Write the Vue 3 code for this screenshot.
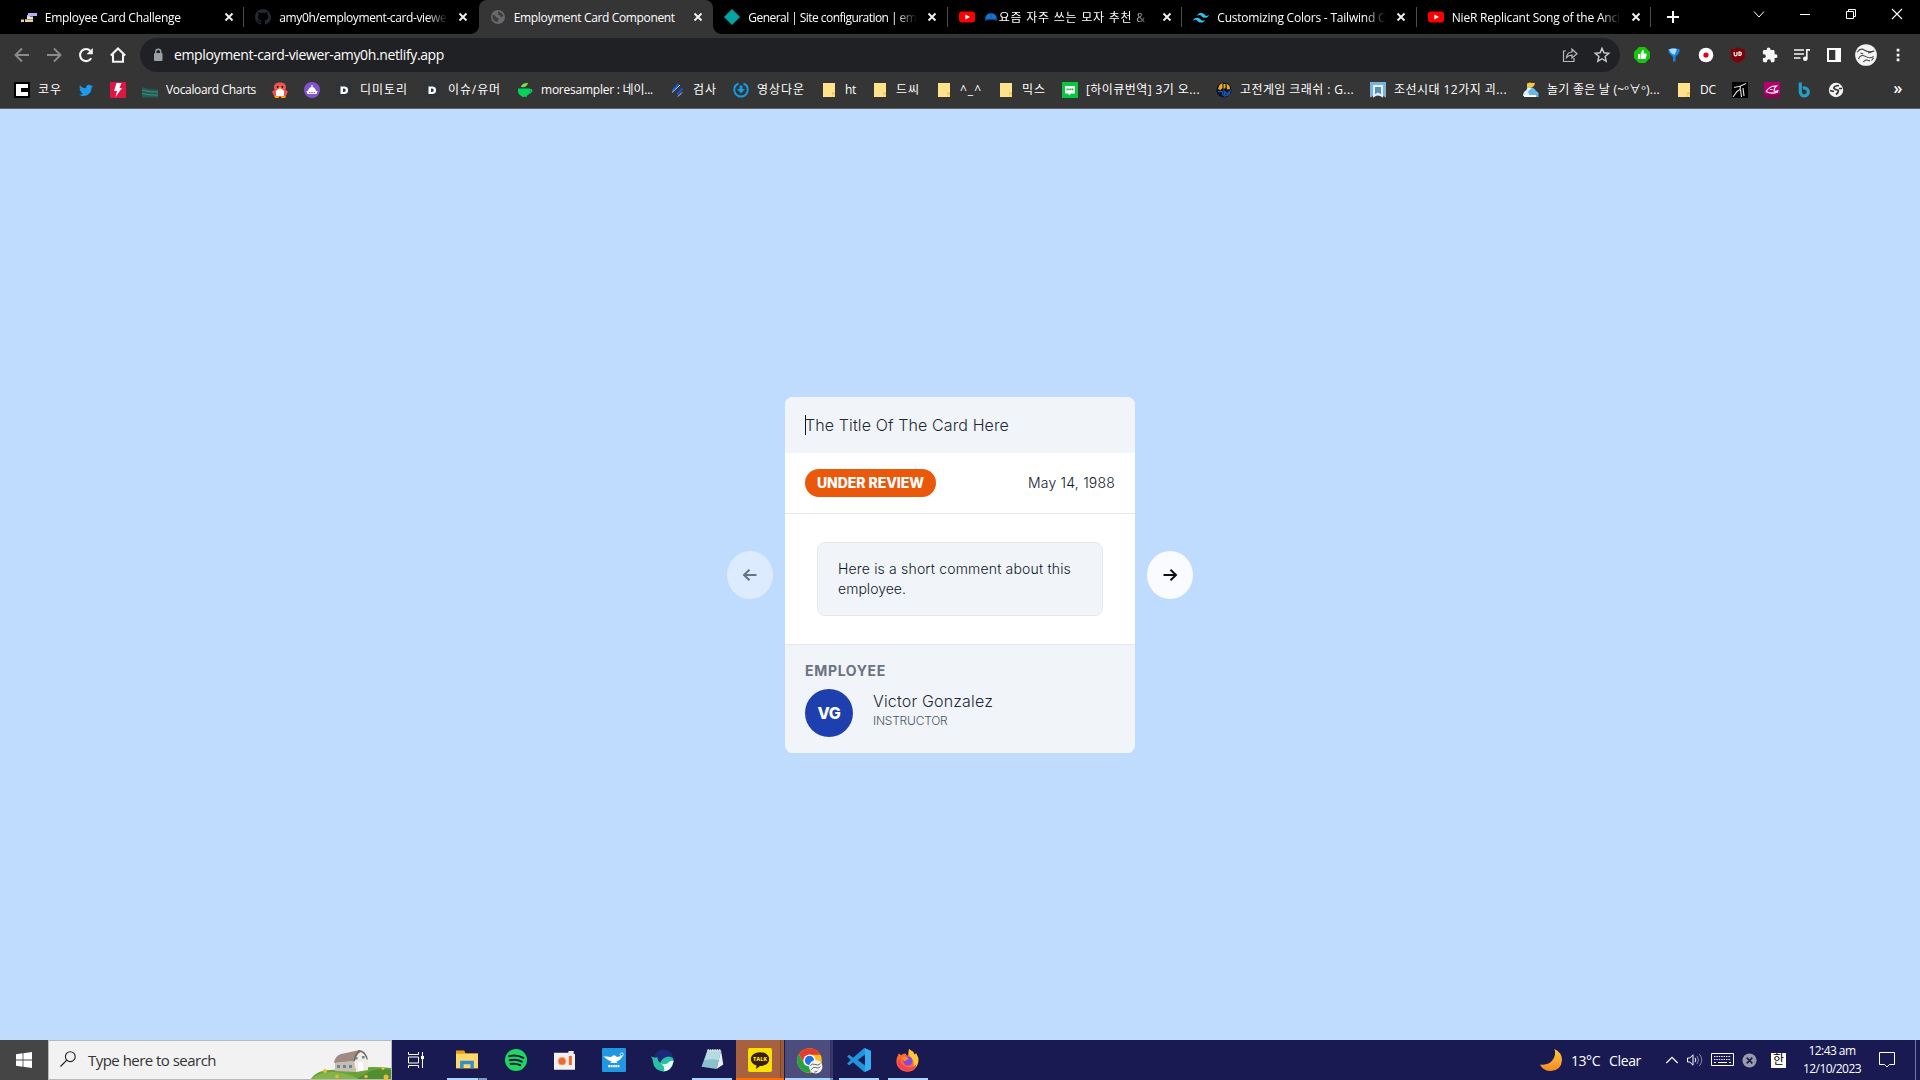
<script setup>
const vFit = {
  mounted(el, { value }) {
    if (!value) return
    const range = document.createRange()
    range.selectNodeContents(el)
    const natural = range.getBoundingClientRect().width
    const count = [...el.textContent.trim()].length
    el.style.letterSpacing = (value - natural) / count + 'px'
  },
}

const icons = {
  bars: '<path d="M7 4h9v3H9v1H6V6h1z" fill="#b9aef5"/><path d="M6 7.500h6V10H6z" fill="#dfe7e2"/><path d="M4 10.300h8V13H4z" fill="#f1cf9d"/><path d="M0 10.500h3V13H0z" fill="#f1cf9d"/>',
  github: '<path fill="#24292e" d="M8 0C3.580 0 0 3.580 0 8c0 3.540 2.290 6.530 5.470 7.590.4.070.55-.17.55-.38 0-.19-.010-.820-.010-1.490-2.010.370-2.530-.490-2.690-.940-.090-.230-.480-.940-.820-1.130-.280-.150-.680-.520-.010-.530.630-.010 1.080.580 1.230.820.720 1.210 1.870.870 2.330.660.070-.520.280-.870.510-1.070-1.780-.200-3.640-.890-3.640-3.950 0-.870.310-1.590.820-2.150-.080-.200-.360-1.020.080-2.120 0 0 .670-.210 2.200.820.640-.180 1.320-.270 2-.270s1.360.090 2 .270c1.530-1.040 2.200-.820 2.200-.820.440 1.100.160 1.920.080 2.120.510.560.820 1.270.820 2.150 0 3.070-1.870 3.750-3.650 3.950.290.250.540.730.540 1.480 0 1.070-.010 1.930-.010 2.200 0 .210.150.460.550.380A8 8 0 0 0 8 0z"/>',
  globe: '<circle cx="8" cy="8" r="7" fill="#686a6e"/><path d="M2.800 5.500Q5 6 6.500 8.500 8.500 8.500 9 10 7.500 11 7.500 13.200 3 12.500 2.500 8zM8 2.500Q12 3 13.300 7l-2.300 1.500Q10.500 6 8 5.500z" fill="#3c3d3f"/>',
  diamond: '<path d="M8 .5L15.500 8 8 15.500.5 8z" fill="#05a5a2" stroke="#05a5a2" stroke-linejoin="round"/>',
  youtube: '<rect y="2.500" width="16" height="11" rx="3" fill="#f00"/><path d="M6.300 5.500v5L11 8z" fill="#fff"/>',
  tailwind: '<path fill="#2fc1ee" d="M4 7.200C4.530 5.070 5.870 4 8 4c3.200 0 3.600 2.400 5.200 2.800 1.070.270 2-.130 2.800-1.200-.530 2.130-1.870 3.200-4 3.200-3.200 0-3.600-2.400-5.200-2.800-1.070-.270-2 .130-2.800 1.200zM0 12c.530-2.130 1.870-3.200 4-3.200 3.200 0 3.600 2.400 5.200 2.800 1.070.270 2-.130 2.800-1.200-.530 2.130-1.870 3.200-4 3.200-3.200 0-3.600-2.400-5.200-2.800-1.070-.270-2 .130-2.800 1.200z"/>',
  cap: '<path d="M1.500 10.500C1 1.500 15 1.500 14.500 10.500z" fill="#1673cf"/><path d="M1 10l14 0 0 2.500q-7-3-14 0z" fill="#064d9c"/><path d="M8 4v5" stroke="#0a55ab"/>',
  close: '<path d="M4.500 4.500l7 7m0-7l-7 7" stroke="#f1f1f1" stroke-width="1.900"/>',
  plus: '<path d="M8 2v12M2 8h12" stroke="#fff" stroke-width="2"/>',
  chevron: '<path d="M3 5.500L8 11l5-5.500" fill="none" stroke="#fff"/>',
  minimize: '<path d="M3 8.500h10" stroke="#fff"/>',
  restore: '<path d="M3.500 5.500h7v7h-7zM5.500 5.500v-2h7v7h-2" fill="none" stroke="#fff"/>',
  exit: '<path d="M3 3l10 10M13 3L3 13" stroke="#fff" stroke-width="1.100"/>',
  back: '<path d="M15 8H2M8 1.500L1.500 8 8 14.500" fill="none" stroke="#8b8b8b" stroke-width="1.900"/>',
  forward: '<path d="M1 8h13M8 1.500L14.500 8 8 14.500" fill="none" stroke="#8b8b8b" stroke-width="1.900"/>',
  reload: '<path d="M13.200 11.200A6 6 0 1 1 12.500 4" fill="none" stroke="#f5f5f5" stroke-width="2.100"/><path d="M14.800 1v6.300H8.500z" fill="#f5f5f5"/>',
  home: '<path d="M.8 8.500L8 1.500l7.200 7M3 7.500v7.200h10V7.500" fill="none" stroke="#f5f5f5" stroke-width="2.100"/>',
  lock: '<rect x="4" y="6" width="8.500" height="8" rx="1" fill="#9aa0a6"/><path d="M5.800 6.500V4.700a2.450 2.450 0 0 1 4.900 0v1.800" fill="none" stroke="#9aa0a6" stroke-width="1.400"/>',
  share: '<path d="M4 4H1.500v10.500H12V11M4.500 10.500c.5-4 2.500-5.500 5.500-5.500V2.200l5 4.500-5 4.300V8.200c-2.500 0-4 .5-5.500 2.300z" fill="none" stroke="#bbb" stroke-width="1.200"/>',
  star: '<path d="M8 1.300l1.900 4.500 4.900.4-3.700 3.200 1.100 4.900L8 11.700l-4.200 2.600 1.100-4.900L1.200 6.200l4.900-.4z" fill="none" stroke="#ccc" stroke-width="1.400"/>',
  thumb: '<path d="M5 0h6l5 5v6l-5 5H5l-5-5V5z" fill="#16c60c"/><path d="M4 7h2v5H4zM6.500 7L8.500 3c2 0 1.500 2 1 3.500h3v2L11.500 12h-5z" fill="#fff"/>',
  funnel: '<path d="M2 2.500Q8-.5 14 2.500L13 6 9.500 10v4.500l-2.500 0V10L3 6z" fill="#1784df"/><path d="M3 2.500Q8 .5 11 2.500L8.500 8 5 6z" fill="#a5dcff"/>',
  record: '<circle cx="8" cy="8" r="7.300" fill="#fff"/><circle cx="8" cy="8" r="2.600" fill="#e0001a"/>',
  shield: '<path d="M8 .2c2 1.300 4 1.800 7 1.800v6c0 4-3 6.500-7 7.800C4 14.500 1 12 1 8V2C4 2 6 1.500 8 .2z" fill="#800009"/><path d="M4.200 5v2.400a1.300 1.300 0 0 0 2.800 0V5M9 5.200h1a1.700 1.700 0 0 1 0 3.300H9z" fill="none" stroke="#fff" stroke-width="1.200"/>',
  puzzle: '<path d="M13.600 7.300h-1V4.500c0-.8-.6-1.400-1.400-1.400H8.500V2.300a1.900 1.900 0 0 0-3.800 0v.8H2.300c-.8 0-1.400.6-1.400 1.400v2.700h1a1.950 1.950 0 0 1 0 3.900h-1v2.700c0 .8.6 1.400 1.400 1.400H5v-1a1.950 1.950 0 0 1 3.900 0v1h2.300c.8 0 1.400-.6 1.400-1.400v-2.700h1a1.900 1.900 0 0 0 0-3.800z" fill="#f5f5f5"/>',
  queue: '<path d="M0 3h10M0 7h10M0 11h6.500M12.800 11.500V2.800H16" fill="none" stroke="#f5f5f5" stroke-width="1.700"/><circle cx="11.300" cy="11.700" r="2.300" fill="#f5f5f5"/>',
  panel: '<path d="M0 0h16v16H0zM2.300 2.300v11.400h7.200V2.300z" fill="#fff" fill-rule="evenodd"/>',
  avatar: '<circle cx="8" cy="8" r="7.900" fill="#f4f4f4"/><path d="M1.500 6Q4 2.500 7 4.500T14 5M2.500 11Q4 7 7.500 9T13.500 9M4 6.500l2 .7M9.500 6.500l2.500-.5M6 13l2-1.500 3 .8M12 12l1.500-2" fill="none" stroke="#444" stroke-width=".8"/>',
  dots: '<path d="M6.700 1.800h2.700v2.700H6.700zM6.700 6.700h2.700v2.700H6.700zM6.700 11.500h2.700v2.700H6.700z" fill="#f5f5f5"/>',
  cbox: '<path d="M0 0h16v16H0z"/><path d="M2 2h12v4H7v4h7v4H2z" fill="#fff"/>',
  twitter: '<path fill="#1d9bf0" d="M15 4.100c-.5.250-1 .400-1.600.450.600-.350 1-.900 1.200-1.500-.5.300-1.100.550-1.700.650a2.800 2.800 0 0 0-4.800 2.500C5.600 6.300 3.300 5.200 1.900 3.300c-.8 1.300-.3 2.900.9 3.700-.450 0-.9-.100-1.300-.350 0 1.400 1 2.500 2.200 2.800-.4.100-.8.100-1.300.050.350 1.100 1.400 1.900 2.600 1.900A5.600 5.600 0 0 1 1 12.700c5 3 12.500.3 12.500-7 .6-.4 1.100-.9 1.500-1.600z"/>',
  bolt: '<rect width="16" height="16" rx="1" fill="#df1544"/><path d="M6.500 1h5L9.500 6H12L5.500 15l1.500-6H4z" fill="#fff"/>',
  wave: '<path d="M0 5q8 3 16 2.500v8H0z" fill="#245b54"/><path d="M0 8q8 2.500 16 2M0 11.500q8 2 16 1.500" fill="none" stroke="#3b9183"/>',
  bird: '<path d="M2.500 15L0 9.500l2.500-1.500C1 3 3 .5 8 .5S15 3 13.500 8L16 9.500l-2.500 5.500z" fill="#ee5555"/><path d="M4 14V9q4-5 8 0v5z" fill="#fff"/><circle cx="5.700" cy="5" r=".9"/><circle cx="10.300" cy="5" r=".9"/><path d="M6.500 5.500h3L8 8z" fill="#ffc400"/><path d="M2.500 14h4.500v2H3zM9 14h4.500v2H9z" fill="#ff9d00"/>',
  ship: '<circle cx="8" cy="8" r="8" fill="#8253cf"/><path d="M7.400 3h1.200v2.500H7.400zM4 9q1-4 4-4t4 4z" fill="#fff"/><path d="M2.500 9h11l-1 3h-9z" fill="#fff"/><path d="M5 10h1.500v1H5zM7.300 10h1.500v1H7.300zM9.600 10h1.500v1H9.600z" fill="#8253cf"/>',
  dee: '<rect width="16" height="16" rx="2" fill="#2f343a"/><path fill-rule="evenodd" d="M4.500 4.500h3.800a3.500 3.500 0 0 1 0 7.500H4.500zM7 6.500v3.500h1a1.600 1.600 0 0 0 0-3.500z" fill="#fff"/>',
  cup: '<path d="M1 6.500h12v2a6 5.500 0 0 1-12 1z" fill="#05d25c"/><path d="M5 14h5M12 8q3.500-1 2.500 1.200T11 11" fill="none" stroke="#05d25c" stroke-width="1.500"/><path d="M4 5q1-4.500 7-4-1 5-7 4z" fill="#78df42"/>',
  stripes: '<path d="M3.500 8.500L9.500 2M8 12.500l5.500-6" stroke="#1255d8" stroke-width="2.200"/><path d="M3 10.500L11 3M9 14.500l4-4" stroke="#dceaff" stroke-width=".9"/>',
  down: '<path d="M5.500 1.500a6.800 6.800 0 1 0 5 0" fill="none" stroke="#139be2" stroke-width="2"/><path d="M6.500 3.500h3V7H12l-4 4.500L4 7h2.500z" fill="#139be2"/>',
  folder: '<path d="M2 1h12v14H2z" fill="#ffe28c"/><path d="M11 10.500h3V15h-3z" fill="#f0bf43"/><path d="M11.500 12h2v3h-2z" fill="#ffe28c"/>',
  talk: '<path d="M0 0h16v16H0z" fill="#04c93f"/><path d="M3 4h10v7.500H9L7 13.500l-.5-2H3z" fill="#fff"/><path d="M4.500 7.300h7" stroke="#04a838" stroke-width="1.800" stroke-dasharray="1.300 .5"/>',
  arcade: '<circle cx="8" cy="8" r="7.600" fill="#0a1226"/><path d="M2 7l1.500-4 3-2 0 5-2 2zM7.500 2h2v4l-2 1zM10.500 1.500l3 2.500 .5 3-3 .500z" fill="#efab21"/><path d="M2 9.500l4 0 1.500 4.500M8 9l3 3 3-3-1 3.500-4 1.500z" fill="none" stroke="#1c56ae" stroke-width="1.300"/>',
  banner: '<path d="M0 0h16v15.500l-3-1.500H3l-3 1.500z" fill="#79b3dc"/><path d="M4 14V4h8v10l-4-2.500z" fill="#5d8fb5" stroke="#e6f4ff" stroke-width="1.900"/>',
  weather: '<path d="M4 1.500l3-1 2 .5 3 0-1 3-3 2-4-1z" fill="#f8c83b"/><path d="M0 14q0-4 3.500-6l1-3 7 2v7z" fill="#d9f3ff"/><path d="M5 9.500l4.500-4 6 5.500v4H7z" fill="#69b8e8"/><path d="M1 14h12" stroke="#fff" stroke-width="2"/>',
  runner: '<path d="M0 0h16v16H0z"/><path d="M2 5.500l6.500-1.500 5.500-2.500M8.500 4L8 7.500l-3 2-4 5.500M8.500 7.500l1 7.500M11 6l1 8" fill="none" stroke="#d9d9d9" stroke-width="1.200"/>',
  pink: '<path d="M0 0h16v16H0z" fill="#b5006e"/><path d="M0 12h16v4H0z" fill="#8c0055"/><path d="M2 9.500q4-6 10.500-5.500-2 1-2.500 5 2 1 4.500-.5M2 9.500q5 3 12 .500M6 7.500h2.500" fill="none" stroke="#fff" stroke-width="1.100"/>',
  bee: '<path d="M4.300 .5v9.500a4 4 0 1 0 2.500-3.800" fill="none" stroke="#249ec6" stroke-width="3.200"/>',
  world: '<circle cx="8" cy="8" r="7.200" fill="#f3f3f3"/><path d="M11 3.500Q6.500 3.500 5.800 6 7 7.800 9.800 8 11.500 9.500 8 12.500M2 8.500l4 1M11 6.500h3" fill="none" stroke="#333" stroke-width="1.700"/>',
  left: '<path d="M14.500 8H2M7.500 2.700L2 8l5.500 5.300" fill="none" stroke="#0b0f17" stroke-width="2"/>',
  right: '<path d="M1.500 8H14M8.500 2.700L14 8l-5.500 5.300" fill="none" stroke="#0b0f17" stroke-width="2"/>',
  windows: '<path d="M0 2.200L6.600 1.300v6.300H0zM7.400 1.200L16 0v7.600H7.400zM0 8.400h6.600v6.300L0 13.800zM7.400 8.400H16V16l-8.600-1.200z" fill="#fff"/>',
  search: '<circle cx="10.300" cy="5.700" r="4.900" fill="none" stroke="#222" stroke-width="1.100"/><path d="M6.800 9.200L.5 15.500" stroke="#222" stroke-width="1.200"/>',
  taskview: '<path d="M.5 0v2.500h10V0M.5 5h10v6H.5zM.5 16v-2.500h10V16M14.500 0v16" fill="none" stroke="#fff"/><path d="M13 4h3v3h-3z" fill="#fff"/>',
  explorer: '<path d="M0 1h6l1 2h9v11H0z" fill="#e9a414"/><path d="M0 3.500h16V14H0z" fill="#ffd86b"/><path d="M3 14V8.500h10V14h-2.500v-3h-5v3z" fill="#318fd1"/>',
  spotify: '<circle cx="8" cy="8" r="8" fill="#1ed760"/><path d="M3 5.300q5.500-1.500 10.300 1.200M3.500 8.200q4.700-1.200 8.700 1M4 10.900q4-.8 7 .9" fill="none" stroke="#171c40" stroke-width="1.450" stroke-linecap="round"/>',
  recorder: '<path d="M0 2h11V.8h4V3h1v12H0z" fill="#f0f0f0"/><circle cx="6.100" cy="8.500" r="3" fill="#ee6b2d" stroke="#f5b08f" stroke-width=".6"/><path d="M11.300 4.500h2.300v7h-2.300z" fill="#ee6b2d"/>',
  ebook: '<rect width="16" height="16" rx=".6" fill="#2197e3"/><path d="M1 5.500l5 .5Q8 3.500 10 6l4-1q-2 3.500-4.500 4l1 1h-5l1-1Q4 8.500 1 5.500z" fill="#fff"/><path d="M4.200 12h7.600" stroke="#fff" stroke-width="1.500" stroke-dasharray="1.200 .35"/><circle cx="13.200" cy="4.300" r="1" fill="none" stroke="#fff" stroke-width=".5"/>',
  whale: '<path d="M2.500 4.500Q4.500 .5 9 .5 14.500 1 15.800 6L8 10 4 7z" fill="#1a2a78"/><path d="M0 5Q2.500 6.500 4.500 5.500 4.500 8.500 6.500 9.500 8 6 12 5.300 16 5.500 15.800 8.500 14.500 15.500 8.500 15.700 2 14.500 1.500 9.500 1.500 7 0 5z" fill="#27bfa5"/><path d="M6.500 9.500Q10 12 12.500 9q2-1.500 3.200-.5Q14 15.500 8.500 15.700q2.500-2.700-2-6.200z" fill="#eafff9"/>',
  notepad: '<path d="M5 1.500h9L11 14 1 12.500z" fill="#8bc0cf"/><path d="M14 1.500l1.500 9.500L11 14z" fill="#e9eef0"/><path d="M5 1.500h9L12.500 8Q7 7 3 8z" fill="#b5dce3"/><path d="M5 1.500h9" stroke="#e8e8e8" stroke-width="1.200" stroke-dasharray="1 .5"/>',
  kakao: '<rect width="16" height="16" rx="1.200" fill="#fae100"/><path d="M8 2.800c3.500 0 6.100 2 6.100 4.700S11.500 12 8 12l-2.700 2 .4-2.400C3.300 11 1.900 9.500 1.900 7.500c0-2.700 2.600-4.700 6.100-4.700z" fill="#371d1e"/><text x="8" y="8.800" text-anchor="middle" font-family="Open Sans,sans-serif" font-size="3.600" font-weight="800" fill="#fae100">TALK</text>',
  chrome: '<circle cx="8" cy="8" r="7.900" fill="#fbc116"/><path d="M1.200 4A7.900 7.900 0 0 1 15 4.300H8L4.800 10z" fill="#e33b2e"/><path d="M1.200 4A7.900 7.900 0 0 0 8 15.900l3-5.200-6 .3z" fill="#26a148"/><circle cx="8" cy="8" r="3.900" fill="#fff"/><circle cx="8" cy="8" r="3" fill="#1a73e8"/><circle cx="12" cy="12" r="4.300" fill="#f2f2f2"/><path d="M8.500 11.500q1-2 3-1t3.500-.5M9 14q1.500-2.500 3-1.500t3-.5M11 15.500l2-.7" fill="none" stroke="#444" stroke-width=".5"/>',
  vscode: '<path d="M11.500 0L16 2v12l-4.500 2L4 9.500 1.500 11.500 0 10.500l2.500-2.500L0 5.500l1.500-1L4 6.500zM12 4.300L7.200 8l4.800 3.700z" fill="#2095dc" fill-rule="evenodd"/><path d="M12 .2L16 2v12l-4 2z" fill="#35adf3"/>',
  firefox: '<path d="M2 3l1.500 1.300Q5 3 6.500 3.200L8 5 9 0q3 1.500 4 4 1-.3 1-1 2 3 1.500 6c-.5 4-3.500 6.800-7.500 6.800S.5 13 .3 9Q.2 6 2 3z" fill="#ff6b2d"/><path d="M9 0q3 1.500 4 4l1-1q2 3 1.500 6-.8 3.500-4 4.500Q14 8 9 4.500z" fill="#ffc83b"/><path d="M1 10q2 5.800 7.500 5.200T14 11q-3 3-7 1.500Q3 11 3 7 1 8 1 10z" fill="#f8405a"/><circle cx="8.300" cy="8.400" r="3.200" fill="#8648e5"/><path d="M3.500 6q3-1.500 5.500.8L6 8.500z" fill="#ff8a28"/>',
  moon: '<path d="M10.500 0Q16 2.500 16 8.200 15.500 15.500 8 16 2 16 0 11.200q6 1 9-3t1.500-8.200z" fill="url(#moonglow)"/><defs><linearGradient id="moonglow" x2="0" y2="1"><stop stop-color="#ffc83d"/><stop offset="1" stop-color="#f48a26"/></linearGradient></defs>',
  up: '<path d="M2.300 11L8 5.300l5.700 5.700" fill="none" stroke="#fff" stroke-width="1.200"/>',
  speaker: '<path d="M.5 6h2.300L6 2.800v10.400L2.800 10H.5z" fill="none" stroke="#fff"/><path d="M8 5.800q1.700 2.200 0 4.400" fill="none" stroke="#fff"/><path d="M10 4q3 4 0 8M12.300 2q5 6 0 12" fill="none" stroke="#8585a9"/>',
  keyboard: '<path d="M.5.5h22v12H.5z" fill="none" stroke="#fff"/><path d="M3 3.500h17M3 6.500h17" stroke="#fff" stroke-dasharray="1.400 1"/><path d="M3 9.500h2M7 9.500h9M18 9.500h2" stroke="#fff"/>',
  cross: '<circle cx="8" cy="8" r="7.500" fill="#9a9aad"/><path d="M5 5l6 6m0-6l-6 6" stroke="#1a1a4d" stroke-width="1.700"/>',
  note: '<path d="M.5 .5h15v12h-5L8 15l-2.500-2.500h-5z" fill="none" stroke="#fff"/>',
}

const tabs = [
  { icon: 'bars', title: 'Employee Card Challenge', width: 136 },
  { icon: 'github', title: 'amy0h/employment-card-viewe', width: 167 },
  { icon: 'globe', title: 'Employment Card Component', width: 161, active: true },
  { icon: 'diamond', title: 'General | Site configuration | em', width: 168 },
  { icon: 'youtube', cap: true, title: '요즘 자주 쓰는 모자 추천 &', width: 147 },
  { icon: 'tailwind', title: 'Customizing Colors - Tailwind C', width: 168 },
  { icon: 'youtube', title: 'NieR Replicant Song of the Anci', width: 168 },
]

const extensions = ['thumb', 'funnel', 'record', 'shield', 'puzzle', 'queue', 'panel', 'avatar', 'dots']

const bookmarks = [
  { icon: 'cbox', label: '코우', width: 24 },
  { icon: 'twitter' },
  { icon: 'bolt' },
  { icon: 'wave', label: 'Vocaloard Charts', width: 90 },
  { icon: 'bird' },
  { icon: 'ship' },
  { icon: 'dee', label: '디미토리', width: 48 },
  { icon: 'dee', label: '이슈/유머', width: 53 },
  { icon: 'cup', label: 'moresampler : 네이...', width: 112 },
  { icon: 'stripes', label: '검사', width: 24 },
  { icon: 'down', label: '영상다운', width: 48 },
  { icon: 'folder', label: 'ht', width: 11 },
  { icon: 'folder', label: '드씨', width: 24 },
  { icon: 'folder', label: '^_^', width: 22 },
  { icon: 'folder', label: '믹스', width: 24 },
  { icon: 'talk', label: '[하이큐번역] 3기 오...', width: 114 },
  { icon: 'arcade', label: '고전게임 크래쉬 : G...', width: 114 },
  { icon: 'banner', label: '조선시대 12가지 괴...', width: 113 },
  { icon: 'weather', label: '놀기 좋은 날 (~º∀º)...', width: 113 },
  { icon: 'folder', label: 'DC', width: 16 },
  { icon: 'runner' },
  { icon: 'pink' },
  { icon: 'bee' },
  { icon: 'world' },
]

const apps = [
  { icon: 'explorer', size: 22, state: 'open stacked' },
  { icon: 'spotify', size: 22 },
  { icon: 'recorder', size: 21 },
  { icon: 'ebook', size: 24 },
  { icon: 'whale', size: 23 },
  { icon: 'notepad', size: 24, state: 'open' },
  { icon: 'kakao', size: 24, state: 'alert' },
  { icon: 'chrome', size: 25, state: 'focused' },
  { icon: 'vscode', size: 24, state: 'open' },
  { icon: 'firefox', size: 23, state: 'open' },
]
</script>

<template>
  <div class="screen">
    <header class="tabstrip">
      <div v-for="(tab, i) in tabs" :key="i" class="tab" :class="{ active: tab.active, divided: i !== 1 && i !== 2 }">
        <svg class="ico" viewBox="0 0 16 16" v-html="icons[tab.icon]"></svg>
        <div class="tab-title">
          <svg v-if="tab.cap" class="cap" viewBox="0 0 16 16" v-html="icons.cap"></svg>
          <span v-fit="tab.width">{{ tab.title }}</span>
        </div>
        <svg class="tab-close" viewBox="0 0 16 16" v-html="icons.close"></svg>
      </div>
      <svg class="ico new-tab" viewBox="0 0 16 16" v-html="icons.plus"></svg>
      <div class="window-controls">
        <svg v-for="n in ['chevron', 'minimize', 'restore', 'exit']" :key="n" class="ico" viewBox="0 0 16 16" v-html="icons[n]"></svg>
      </div>
    </header>

    <div class="toolbar">
      <svg v-for="n in ['back', 'forward', 'reload', 'home']" :key="n" class="ico" viewBox="0 0 16 16" v-html="icons[n]"></svg>
      <div class="omnibox">
        <svg class="ico" viewBox="0 0 16 16" v-html="icons.lock"></svg>
        <span class="url"><span v-fit="270">employment-card-viewer-amy0h.netlify.app</span></span>
        <svg class="ico" viewBox="0 0 16 16" v-html="icons.share"></svg>
        <svg class="ico" viewBox="0 0 16 16" v-html="icons.star"></svg>
      </div>
      <div class="extensions">
        <div v-for="n in extensions" :key="n" class="ext">
          <svg class="ico" :class="n" viewBox="0 0 16 16" v-html="icons[n]"></svg>
        </div>
      </div>
    </div>

    <nav class="bookmarks">
      <div v-for="(b, i) in bookmarks" :key="i" class="bookmark">
        <svg class="ico" viewBox="0 0 16 16" v-html="icons[b.icon]"></svg>
        <span v-if="b.label" class="label" :style="{ width: b.width + 'px' }"><span v-fit="b.width">{{ b.label }}</span></span>
      </div>
      <span class="overflow">»</span>
    </nav>

    <main class="page">
      <button class="arrow dim"><svg viewBox="0 0 16 16" v-html="icons.left"></svg></button>
      <article class="card">
        <header class="card-title"><i class="caret"></i><span v-fit="204">The Title Of The Card Here</span></header>
        <div class="status">
          <span class="badge"><span v-fit="107">UNDER REVIEW</span></span>
          <span v-fit="87" class="date">May 14, 1988</span>
        </div>
        <div class="body">
          <p class="comment"><span v-fit="233">Here is a short comment about this</span><br><span v-fit="68">employee.</span></p>
        </div>
        <footer class="employee">
          <h2><span v-fit="81">EMPLOYEE</span></h2>
          <div class="person">
            <div class="initials"><span v-fit="23">VG</span></div>
            <div>
              <div class="name"><span v-fit="120">Victor Gonzalez</span></div>
              <div class="role"><span v-fit="74.5">INSTRUCTOR</span></div>
            </div>
          </div>
        </footer>
      </article>
      <button class="arrow"><svg viewBox="0 0 16 16" v-html="icons.right"></svg></button>
    </main>

    <footer class="taskbar">
      <div class="start"><svg class="ico" viewBox="0 0 16 16" v-html="icons.windows"></svg></div>
      <div class="searchbox">
        <svg class="ico" viewBox="0 0 16 16" v-html="icons.search"></svg>
        <span v-fit="128">Type here to search</span>
        <svg class="farm" viewBox="0 0 80 38">
          <path d="M0 38Q6 27 30 29 55 24 80 27V38z" fill="#6ba13b" />
          <path d="M0 38Q18 24 48 38z" fill="#82b64c" />
          <path d="M46 38Q65 24 80 29v9z" fill="#4f8f31" />
          <path d="M42 17q2-7 7-7 6 1 8 9v10l-12 2z" fill="#f1ede6" />
          <path d="M24 22l19-2 2 11-21-1z" fill="#c9bdb2" />
          <path d="M23 22q1-7 7-9l19-4q-5 4-6 11z" fill="#a08a84" />
          <path d="M48 9q7 0 9 10l-1.500-1q-2-6-6-7-4 2-5.500 9l-1.500.5q1-8 5.500-11.500z" fill="#776560" />
          <path d="M26 24h3v3h-3zM32 24h3v3h-3zM38 24h3v3h-3zM44 16h2.500v2.500H44zM51 15h2.500v2.500H51z" fill="#5d8a97" />
          <path d="M47 21h5v9h-5z" fill="#fff" />
          <g fill="#f0b92f"><circle cx="14" cy="30" r="2" /><circle cx="26" cy="35.500" r="1.800" /><circle cx="55" cy="35.500" r="1.800" /><circle cx="72" cy="27.500" r="1.500" /><circle cx="75" cy="36" r="2.500" /></g>
        </svg>
      </div>
      <div class="taskview"><svg class="ico" viewBox="0 0 16 16" v-html="icons.taskview"></svg></div>
      <div class="apps">
        <div v-for="a in apps" :key="a.icon" class="app" :class="a.state">
          <svg viewBox="0 0 16 16" :style="{ width: a.size + 'px', height: a.size + 'px' }" v-html="icons[a.icon]"></svg>
        </div>
      </div>
      <div class="tray">
        <svg class="moon" viewBox="0 0 16 16" v-html="icons.moon"></svg>
        <span class="temp"><span v-fit="29">13°C</span></span>
        <span class="sky"><span v-fit="32">Clear</span></span>
        <svg class="ico up" viewBox="0 0 16 16" v-html="icons.up"></svg>
        <svg class="ico speaker" viewBox="0 0 16 16" v-html="icons.speaker"></svg>
        <svg class="keyboard" viewBox="0 0 23 13" v-html="icons.keyboard"></svg>
        <svg class="ico cross" viewBox="0 0 16 16" v-html="icons.cross"></svg>
        <span class="ime">한</span>
        <div class="clock"><div><span v-fit="47">12:43 am</span></div><div><span v-fit="58">12/10/2023</span></div></div>
        <svg class="ico" viewBox="0 0 16 16" v-html="icons.note"></svg>
        <i class="peek"></i>
      </div>
    </footer>
  </div>
</template>

<style>
body { margin: 0; overflow: hidden; }
</style>

<style scoped>
* { box-sizing: border-box; }
svg { display: block; flex: none; overflow: visible; }
.screen {
  width: 1920px;
  height: 1080px;
  display: flex;
  flex-direction: column;
  overflow: hidden;
  font-family: "Open Sans", "Noto Sans CJK KR", sans-serif;
  font-size: 12px;
  color: #fff;
  background: #bfdbfe;
}
.ico { width: 16px; height: 16px; }

.tabstrip { height: 34px; flex: none; display: flex; background: #000; padding-left: 9.800px; }
.tab { position: relative; width: 234.500px; flex: none; display: flex; align-items: center; padding-left: 11px; }
.tab.divided::after { content: ""; width: 1px; height: 20px; background: #4c4c4c; position: absolute; right: 0; top: 7px; }
.tab.active { background: #353535; border-radius: 8px 8px 0 0; }
.tab.active::before, .tab.active::after {
  content: ""; position: absolute; bottom: 0; width: 8px; height: 8px;
}
.tab.active::before { left: -8px; background: radial-gradient(circle at 0 0, #000 7.500px, #353535 8px); }
.tab.active::after { right: -8px; background: radial-gradient(circle at 100% 0, #000 7.500px, #353535 8px); }
.tab-title {
  width: 168px; height: 24px; margin-left: 8px; display: flex; align-items: center; overflow: hidden; white-space: pre;
  -webkit-mask-image: linear-gradient(90deg, #000 148px, transparent 169px);
  mask-image: linear-gradient(90deg, #000 148px, transparent 169px);
}
.active .tab-title { -webkit-mask-image: none; mask-image: none; }
.cap { width: 14px; height: 14px; margin: 0 1px 0 1px; }
.tab-close { width: 16px; height: 16px; margin-left: 8px; }
.new-tab { margin: 9px 0 0 14px; }
.window-controls { display: flex; gap: 30px; margin: 6px 15px 0 auto; }

.toolbar { height: 38px; flex: none; background: #353535; display: flex; align-items: center; padding: 4px 14px 0; gap: 16px; }
.omnibox { width: 1480px; height: 34px; flex: none; border-radius: 17px; background: #202124; display: flex; align-items: center; gap: 16px; padding: 0 10px; margin-left: -2px; font-size: 14px; }
.url { flex: 1; margin-left: -8px; white-space: nowrap; }
.url span { position: relative; top: -1px; }
.extensions { display: flex; margin-left: -10px; }
.ext { width: 32px; display: flex; justify-content: center; }
.ico.avatar { width: 22px; height: 22px; margin: -3px; }
.ico.panel { width: 14px; height: 14px; margin-top: 1px; }

.bookmarks { height: 37px; flex: none; background: #353535; border-bottom: 1px solid #606162; display: flex; align-items: center; gap: 16px; padding: 0 14px; }
.bookmark { display: flex; align-items: center; gap: 8px; }
.label { white-space: nowrap; height: 20px; line-height: 19px; }
.overflow { margin: -4px 3.500px 0 auto; font-size: 16px; font-weight: 600; }

.page { flex: 1; display: flex; justify-content: center; align-items: center; gap: 12px; font-family: Inter, sans-serif; color: #1f2937; }
.arrow { width: 46px; height: 48px; border: 0; border-radius: 50%; background: #f9fbff; display: flex; align-items: center; justify-content: center; padding: 0; }
.arrow svg { width: 16px; height: 16px; }
.dim { opacity: .5; }
.card { width: 350px; height: 356px; border-radius: 8px; overflow: hidden; background: #fff; display: flex; flex-direction: column; }
.card-title { position: relative; height: 56px; flex: none; padding: 16px 20px; line-height: 24px; font-size: 16px; font-weight: 300; background: #f1f5f9; }
.caret { position: absolute; left: 20px; top: 18px; width: 1px; height: 20px; background: #0f172a; }
.status { height: 61px; flex: none; border-bottom: 1px solid #e5e7eb; display: flex; align-items: center; justify-content: space-between; padding: 0 20px; font-size: 14px; }
.badge { width: 131px; height: 28px; line-height: 28px; border-radius: 14px; padding-left: 12px; background: #ea580c; color: #fff; font-weight: 800; white-space: nowrap; }
.date { font-weight: 300; white-space: nowrap; color: #0f172a; }
.body { height: 130px; flex: none; padding: 28px 32px; }
.comment { margin: 0; height: 74px; border: 1px solid #e5e7eb; border-radius: 8px; background: #f1f5f9; padding: 16px 20px; font-size: 14px; line-height: 20px; font-weight: 300; white-space: nowrap; color: #0f172a; }
.employee { flex: 1; border-top: 1px solid #e5e7eb; background: #f1f5f9; padding: 16px 20px; }
h2 { margin: 0 0 8px; font-size: 14px; line-height: 20px; font-weight: 700; color: #6b7280; }
.person { display: flex; gap: 20px; }
.initials { width: 48px; height: 48px; border-radius: 50%; background: #1e40af; color: #fff; font-size: 16px; font-weight: 800; display: flex; align-items: center; justify-content: center; }
.name { font-size: 16px; line-height: 24px; font-weight: 300; }
.role { font-size: 12px; line-height: 16px; font-weight: 300; color: #4b5563; }

.taskbar { height: 40px; flex: none; background: #191a52; display: flex; }
.start { width: 48px; background: #454545; display: flex; align-items: center; justify-content: center; }
.searchbox { position: relative; width: 344px; background: #f2f2f2; border: 1px solid #b9b9b9; display: flex; align-items: center; padding-left: 11px; gap: 12px; font-size: 15px; color: #333; white-space: nowrap; }
.searchbox .ico { margin-top: -2px; }
.farm { position: absolute; right: 0; bottom: 0; width: 80px; height: 38px; }
.taskview { width: 50px; display: flex; align-items: center; padding-left: 16px; }
.apps { display: flex; }
.app { position: relative; width: 49px; display: flex; align-items: center; justify-content: center; }
.open::after, .alert::after, .focused::after { content: ""; position: absolute; bottom: 0; left: 5px; width: 40px; height: 2px; background: #a9d8fc; }
.stacked::after { background: linear-gradient(90deg, #a9d8fc 31px, #4d6688 31px, #4d6688 32px, #7f9dbb 32px); }
.alert { background: linear-gradient(90deg, #a7613e 44px, #79472f 44px, #79472f 45px, #9f5a37 45px, #9f5a37 48px, #191a52 48px); }
.alert::after { left: 0; width: 48px; background: #ff6f00; }
.focused { background: linear-gradient(90deg, #4c4d7c 45px, #303163 45px, #3c3d6d 48px, #191a52 48px); }
.focused::after { left: 0; width: 48px; background: linear-gradient(90deg, #a9d8fc 45px, #7395b6 45px); }
.alert svg, .focused svg { margin-right: 1px; }
.tray { display: flex; align-items: center; margin-left: auto; white-space: nowrap; }
.moon { width: 22px; height: 22px; margin-right: 9px; }
.temp { width: 38px; font-size: 14px; }
.sky { width: 55px; font-size: 14px; }
.speaker { margin-left: 7px; }
.keyboard { width: 23px; height: 13px; margin: -1px 8px 0; }
.cross { width: 15px; height: 15px; }
.ime { width: 15px; height: 15px; background: #fff; color: #000; font-size: 12px; line-height: 14px; text-align: center; margin: 0 14px 0 14px; }
.clock { width: 64px; text-align: center; line-height: 18px; margin-right: 15px; }
.peek { width: 1px; height: 40px; background: #7778a2; margin: 0 4px 0 20px; }
</style>
